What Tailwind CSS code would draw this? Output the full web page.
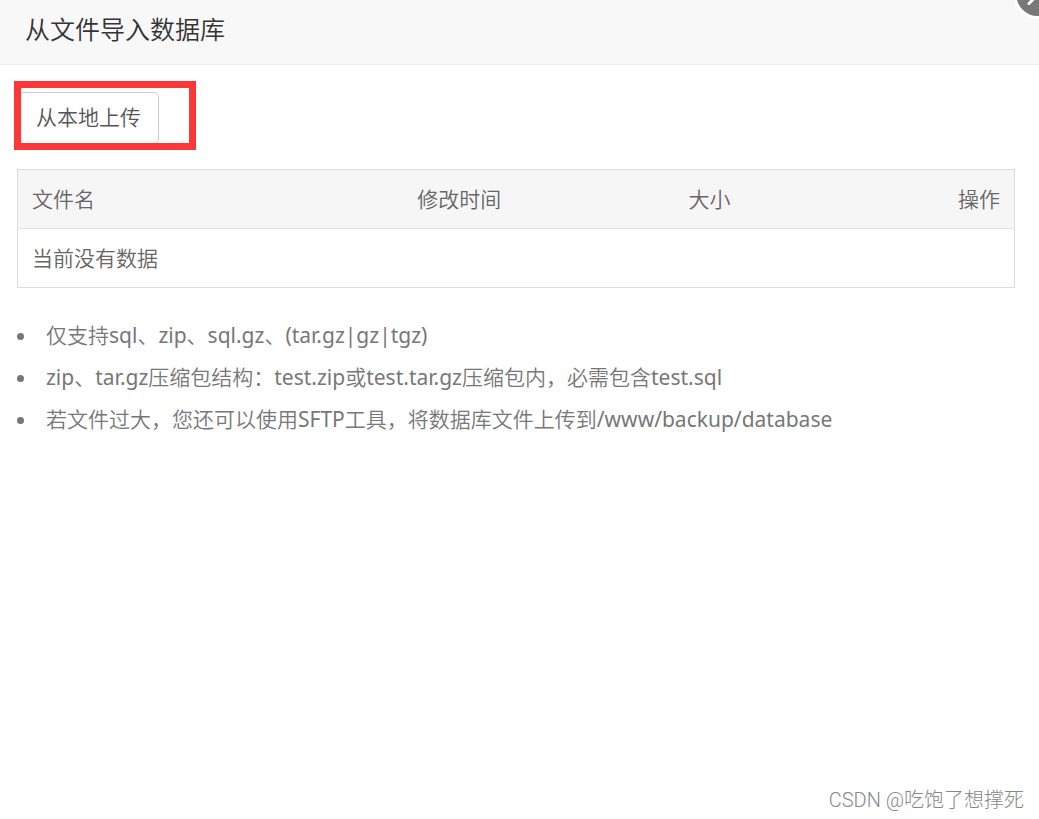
<!DOCTYPE html>
<html lang="zh-CN">
<head>
<meta charset="utf-8">
<meta name="viewport" content="width=device-width, initial-scale=1">
<title>从文件导入数据库</title>
<script src="https://cdn.jsdelivr.net/npm/@tailwindcss/browser@4"></script>
</head>
<body class="relative flex min-h-screen flex-col overflow-x-hidden bg-white font-['Noto_Sans_CJK_SC_DemiLight','Noto_Sans_CJK_SC',sans-serif] text-[21px] leading-[30px] text-[#666]">
  <header class="border-b border-[#eee] bg-[#f8f8f8] px-[25px] pt-[10px] pb-[18px]">
    <h1 class="text-[25px] leading-9 font-normal text-[#333]">从文件导入数据库</h1>
  </header>
  <button type="button" aria-label="关闭" class="absolute top-0 right-0 h-5 w-6 overflow-hidden">
    <svg class="block h-5 w-6" viewBox="0 0 24 20" aria-hidden="true">
      <circle cx="22.5" cy="-5" r="24" fill="#fff"/>
      <circle cx="22.5" cy="-5" r="21" fill="#787878"/>
      <path d="M14 3.500L31 -13.500M31 3.500L14 -13.500" stroke="#fff" stroke-width="3" stroke-linecap="round"/>
    </svg>
  </button>
  <main class="flex-1 pt-[27px] pr-6 pl-[17px]">
    <div class="relative flex">
      <button type="button" class="rounded-[5px] border border-[#ccc] bg-white pt-2 pr-[17px] pb-3 pl-[18px] text-[#555]">从本地上传</button>
      <div class="pointer-events-none absolute -top-[11px] -left-[3px] h-[69px] w-[182px] border-[7px] border-[#fc3737]"></div>
    </div>
    <table class="mt-[25px] w-full table-fixed border-collapse border border-[#ddd] text-left">
      <thead>
        <tr class="border-b border-[#e3e3e3] bg-[#f6f6f6]">
          <th scope="col" class="w-[38.7%] px-[14px] pt-[13px] pb-[15px] font-normal">文件名</th>
          <th scope="col" class="w-[27.2%] px-[14px] pt-[13px] pb-[15px] font-normal">修改时间</th>
          <th scope="col" class="px-[14px] pt-[13px] pb-[15px] font-normal">大小</th>
          <th scope="col" class="px-[14px] pt-[13px] pb-[15px] text-right font-normal">操作</th>
        </tr>
      </thead>
      <tbody>
        <tr><td colspan="4" class="px-[14px] pt-[13px] pb-[15px] font-normal">当前没有数据</td></tr>
      </tbody>
    </table>
    <ul class="mt-[26px] list-outside list-disc pl-[21px] font-['Noto_Sans','Noto_Sans_CJK_SC_DemiLight','Noto_Sans_CJK_SC',sans-serif] leading-[42px] text-[#777]">
      <li class="pl-2">仅支持sql、zip、sql.gz、(tar.gz|gz|tgz)</li>
      <li class="pl-2">zip、tar.gz压缩包结构：test.zip或test.tar.gz压缩包内，必需包含test.sql</li>
      <li class="pl-2">若文件过大，您还可以使用SFTP工具，将数据库文件上传到/www/backup/database</li>
    </ul>
  </main>
  <footer class="px-[15px] pb-1 text-right font-['Roboto','Noto_Sans_CJK_SC',sans-serif] text-[20px] font-light text-[#888]">CSDN @吃饱了想撑死</footer>
</body>
</html>
